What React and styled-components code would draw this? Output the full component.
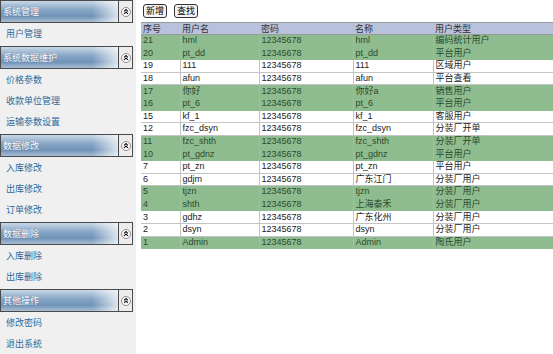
import styled, { createGlobalStyle } from "styled-components";

const GlobalStyle = createGlobalStyle`
  html, body {
    margin: 0;
    padding: 0;
    background: #fff;
    font-family: "Liberation Sans", "Noto Sans CJK SC", sans-serif;
    font-size: 9px;
  }
`;

const Page = styled.div`
  display: flex;
  width: 553px;
  height: 354px;
  overflow: hidden;
`;

const Sidebar = styled.div`
  width: 136px;
  flex-shrink: 0;
  background: #f0f0f0;
`;

const SectionHeader = styled.div`
  display: flex;
  width: 131px;
  height: 21px;
  border: 1px solid #4a4a4a;
`;

const HeaderTitle = styled.div`
  flex: 1;
  display: flex;
  align-items: center;
  padding-left: 2px;
  color: #fff;
  font-family: "Noto Sans CJK SC", sans-serif;
  font-size: 9px;
  text-shadow: 0 0 1px rgba(40, 70, 110, 0.6);
  background:
    linear-gradient(to right, rgba(255, 255, 255, 0) 78%, rgba(255, 255, 255, 0.75) 100%),
    linear-gradient(to bottom, #c9d8e7 0%, #89a8c7 40%, #7093b7 72%, #a6bdd3 100%);
`;

const HeaderToggle = styled.div`
  width: 13px;
  display: flex;
  align-items: center;
  justify-content: center;
  border-left: 1px solid #4a4a4a;
  background: #ececec;
`;

const ItemList = styled.div`
  padding: 1px 0;
`;

const Item = styled.div`
  height: 21px;
  line-height: 19px;
  padding-left: 6px;
  color: #2a6b9c;
  font-family: "Noto Sans CJK SC", sans-serif;
  font-size: 9px;
`;

const Main = styled.div`
  flex: 1;
  padding: 4px 0 0 5px;
`;

const Toolbar = styled.div`
  display: flex;
  gap: 7px;
  padding-left: 2px;
  height: 14px;
`;

const Button = styled.button`
  height: 14px;
  padding: 0 2px;
  margin: 0;
  border: 1px solid #333;
  border-radius: 3px;
  background: #f4f4f4;
  color: #000;
  font-family: "Noto Sans CJK SC", sans-serif;
  font-size: 9px;
  line-height: 12px;
`;

const Table = styled.table`
  margin-top: 4px;
  width: 415px;
  border-collapse: collapse;
  table-layout: fixed;
`;

const HeadCell = styled.th`
  height: 11px;
  padding: 0 0 0 2px;
  text-align: left;
  font-weight: normal;
  font-family: "Noto Sans CJK SC", sans-serif;
  font-size: 9px;
  line-height: 11px;
  color: #333;
  background: #b9c2dc;
  border-top: 1px solid #9a9a9a;
  border-bottom: 1px solid #9a9a9a;
`;

const Row = styled.tr`
  height: 12.6px;
  background: ${(p) => (p.$green ? "#8fbc8f" : "#fff")};
`;

const Cell = styled.td`
  padding: 0 0 0 2px;
  font-size: 9px;
  line-height: 11px;
  white-space: nowrap;
  overflow: hidden;
  color: ${(p) => (p.$green ? "#2e4a2e" : "#222")};
  border-bottom: 1px solid ${(p) => (p.$green ? "#8fbc8f" : "#c4c4c4")};
  border-left: 1px solid ${(p) => (p.$green ? "#9cc49c" : "#c4c4c4")};
  &:first-child {
    border-left: none;
  }
`;

function ToggleIcon() {
  return (
    <svg width="10" height="10" viewBox="0 0 10 10">
      <circle cx="5" cy="5" r="4.5" fill="#fff" stroke="#8a8a8a" />
      <path d="M3 4.4 L5 2.6 L7 4.4 M3 6.8 L5 5 L7 6.8" fill="none" stroke="#111" strokeWidth="1.1" />
    </svg>
  );
}

const menu = [
  { title: "系统管理", items: ["用户管理"] },
  { title: "系统数据维护", items: ["价格参数", "收款单位管理", "运输参数设置"] },
  { title: "数据修改", items: ["入库修改", "出库修改", "订单修改"] },
  { title: "数据删除", items: ["入库删除", "出库删除"] },
  { title: "其他操作", items: ["修改密码", "退出系统"] },
];

const users = [
  ["21", "hml", "12345678", "hml", "编码统计用户"],
  ["20", "pt_dd", "12345678", "pt_dd", "平台用户"],
  ["19", "111", "12345678", "111", "区域用户"],
  ["18", "afun", "12345678", "afun", "平台查看"],
  ["17", "你好", "12345678", "你好a", "销售用户"],
  ["16", "pt_6", "12345678", "pt_6", "平台用户"],
  ["15", "kf_1", "12345678", "kf_1", "客服用户"],
  ["12", "fzc_dsyn", "12345678", "fzc_dsyn", "分装厂开单"],
  ["11", "fzc_shth", "12345678", "fzc_shth", "分装厂开单"],
  ["10", "pt_gdnz", "12345678", "pt_gdnz", "平台用户"],
  ["7", "pt_zn", "12345678", "pt_zn", "平台用户"],
  ["6", "gdjm", "12345678", "广东江门", "分装厂用户"],
  ["5", "tjzn", "12345678", "tjzn", "分装厂用户"],
  ["4", "shth", "12345678", "上海泰禾", "分装厂用户"],
  ["3", "gdhz", "12345678", "广东化州", "分装厂用户"],
  ["2", "dsyn", "12345678", "dsyn", "分装厂用户"],
  ["1", "Admin", "12345678", "Admin", "陶氏用户"],
];

const columns = [
  { label: "序号", width: 39 },
  { label: "用户名", width: 79 },
  { label: "密码", width: 94 },
  { label: "名称", width: 80 },
  { label: "用户类型", width: 123 },
];

export default function App() {
  return (
    <>
      <GlobalStyle />
      <Page>
        <Sidebar>
          {menu.map((section) => (
            <div key={section.title}>
              <SectionHeader>
                <HeaderTitle>{section.title}</HeaderTitle>
                <HeaderToggle>
                  <ToggleIcon />
                </HeaderToggle>
              </SectionHeader>
              <ItemList>
                {section.items.map((item) => (
                  <Item key={item}>{item}</Item>
                ))}
              </ItemList>
            </div>
          ))}
        </Sidebar>
        <Main>
          <Toolbar>
            <Button>新增</Button>
            <Button>查找</Button>
          </Toolbar>
          <Table>
            <colgroup>
              {columns.map((c) => (
                <col key={c.label} style={{ width: c.width }} />
              ))}
            </colgroup>
            <thead>
              <tr>
                {columns.map((c) => (
                  <HeadCell key={c.label}>{c.label}</HeadCell>
                ))}
              </tr>
            </thead>
            <tbody>
              {users.map((u, i) => {
                const green = i % 4 === 0 || i % 4 === 1;
                return (
                  <Row key={u[0]} $green={green}>
                    {u.map((v, j) => (
                      <Cell key={j} $green={green}>
                        {v}
                      </Cell>
                    ))}
                  </Row>
                );
              })}
            </tbody>
          </Table>
        </Main>
      </Page>
    </>
  );
}
